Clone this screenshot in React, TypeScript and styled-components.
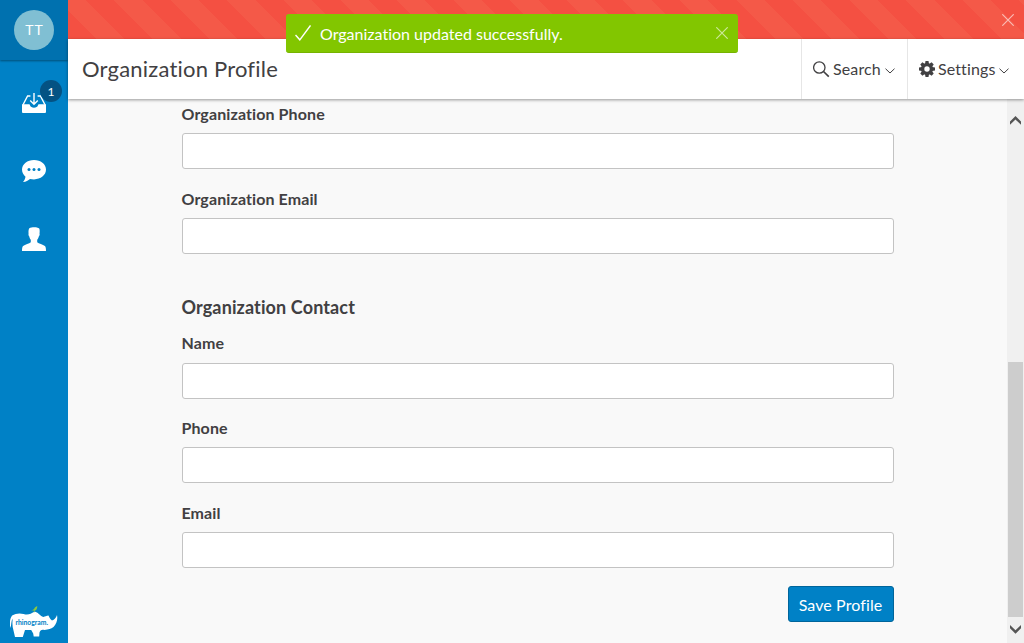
import React from "react";
import styled, { createGlobalStyle } from "styled-components";

const GlobalStyle = createGlobalStyle`
  *, *::before, *::after { box-sizing: border-box; }
  body {
    margin: 0;
    font: 400 16px/24px Lato, "Liberation Sans", sans-serif;
    font-variant-ligatures: none;
    color: #414042;
    background: #f9f9f9;
    overflow: hidden;
  }
  button, input { font-variant-ligatures: none; }
  svg { display: block; flex: none; }
`;

const Shell = styled.div`
  position: relative;
  display: flex;
  width: 100%;
  height: 100vh;
`;

const Sidebar = styled.nav`
  display: flex;
  flex-direction: column;
  align-items: center;
  width: 68px;
  flex: none;
  padding-bottom: 4px;
  background: #0081c6;
`;

const AvatarPanel = styled.div`
  display: flex;
  justify-content: center;
  width: 100%;
  height: 60px;
  padding-top: 10px;
  background: #0071af;
  box-shadow: 0 1px 2px rgba(0, 0, 0, 0.4);
`;

const Avatar = styled.div`
  width: 40px;
  height: 40px;
  border-radius: 50%;
  background: #80bfd3;
  color: #fff;
  font-size: 14px;
  line-height: 40px;
  letter-spacing: 0.8px;
  text-indent: 0.8px;
  text-align: center;
`;

const NavList = styled.div`
  display: flex;
  flex-direction: column;
  flex: 1;
  padding-top: 9px;
`;

const NavItem = styled.a`
  position: relative;
  display: flex;
  align-items: center;
  justify-content: center;
  width: 68px;
  height: 68px;
`;

const Badge = styled.span`
  position: absolute;
  top: 11px;
  left: 40px;
  width: 22px;
  height: 22px;
  border-radius: 50%;
  background: #045283;
  color: #fff;
  font-size: 12px;
  line-height: 23px;
  text-align: center;
`;

const Main = styled.div`
  display: flex;
  flex-direction: column;
  flex: 1;
  min-width: 0;
`;

const AlertBar = styled.div`
  display: flex;
  align-items: center;
  justify-content: flex-end;
  height: 39px;
  flex: none;
  padding-right: 10px;
  background: repeating-linear-gradient(45deg, #f45042 0 20px, #f45948 20px 40px);
`;

const Header = styled.header`
  position: relative;
  z-index: 1;
  display: flex;
  height: 60px;
  flex: none;
  background: #fff;
  box-shadow: 0 1px 3px rgba(0, 0, 0, 0.4);
`;

const Title = styled.h1`
  flex: 1;
  margin: 0;
  padding-left: 14px;
  font-size: 22px;
  font-weight: 400;
  line-height: 60px;
  letter-spacing: 0.2px;
`;

const HeaderAction = styled.button<{ $width: number }>`
  display: flex;
  align-items: center;
  width: ${(p) => p.$width}px;
  padding: 0 0 0 10.5px;
  border: 0;
  border-left: 1px solid #e6e6e6;
  background: none;
  color: inherit;
  font: inherit;
  font-variant-ligatures: none;
`;

const ActionText = styled.span`
  margin: 0 4px 0 3.5px;
  letter-spacing: 0.12px;
`;

const Content = styled.div`
  display: flex;
  flex: 1;
  min-height: 0;
`;

const FormArea = styled.form`
  flex: 1;
  padding: 3px 113px 0 114px;
`;

const Field = styled.div<{ $gap?: number; $labelHeight?: number }>`
  display: flex;
  flex-direction: column;
  margin-bottom: ${(p) => p.$gap ?? 18}px;

  label { height: ${(p) => p.$labelHeight ?? 31}px; }
`;

const Label = styled.label`
  margin-left: -0.5px;
  font-weight: 700;
  letter-spacing: 0.1px;
`;

const Input = styled.input`
  width: 712px;
  height: 36px;
  padding: 0 10px;
  border: 1px solid #c3c3c3;
  border-radius: 3px;
  background: #fff;
  font: inherit;
`;

const SectionTitle = styled.h2`
  margin: 0 0 12px -0.5px;
  font-size: 18px;
  font-weight: 700;
  line-height: 24px;
  letter-spacing: 0.12px;
`;

const FormFooter = styled.div`
  display: flex;
  justify-content: flex-end;
  width: 712px;
`;

const SaveButton = styled.button`
  width: 106px;
  height: 36px;
  padding: 2px 1px 0 0;
  border: 1px solid #00659b;
  border-radius: 3px;
  background: #0081c6;
  color: #fff;
  font: inherit;
  letter-spacing: 0.1px;
  font-variant-ligatures: none;
`;

const Scrollbar = styled.div`
  display: flex;
  flex-direction: column;
  align-items: center;
  width: 17px;
  padding: 17px 0 9px;
  background: #f0f0f0;
`;

const Thumb = styled.div`
  width: 15px;
  height: 255px;
  margin: auto 0 8px;
  background: #cdcdcd;
`;

const Toast = styled.div`
  position: absolute;
  z-index: 2;
  top: 14px;
  left: 286px;
  display: flex;
  align-items: center;
  width: 452px;
  height: 39px;
  padding: 0 10px 0 9px;
  border-bottom: 1px solid #76b300;
  border-radius: 3px;
  background: #82c600;
  color: #fff;
`;

const ToastText = styled.span`
  flex: 1;
  padding: 2px 0 0 9px;
`;

const Close = () => (
  <svg width="12" height="12" viewBox="0 0 12 12" fill="none" stroke="#fff" strokeOpacity=".6" strokeWidth="1.2">
    <path d="M.3.3l11.4 11.4M11.7.3L.3 11.7" />
  </svg>
);

const ChevronIcon = styled.svg`
  margin-top: 3px;
`;

const Chevron = () => (
  <ChevronIcon width="10" height="6" viewBox="0 0 10 6" fill="none" stroke="#414042">
    <path d="M.5.7L5 5 9.5.7" />
  </ChevronIcon>
);

const ScrollArrow = ({ down = false }: { down?: boolean }) => (
  <svg width="11" height="9" viewBox="0 0 11 9" fill="#555">
    <path d={down ? "M0 0L5.5 5.2 11 0V3.2L5.5 8.8 0 3.2z" : "M0 8.8L5.5 3.6 11 8.8V5.6L5.5 0 0 5.6z"} />
  </svg>
);

const InboxIcon = () => (
  <svg width="24" height="22" viewBox="0 0 24 22">
    <path d="M8.4 4H5.6L1 12.8M15.6 4h2.8L23 12.8" fill="none" stroke="#fff" strokeWidth="1.4" />
    <path d="M0 12.2h6.8c.8 0 1 .5 1.3 1.3.5 1.3 1.8 2.2 3.9 2.2s3.400-.9 3.900-2.200c.3-.8.5-1.300 1.300-1.300H24v7.500c0 .8-.5 1.300-1.300 1.300H1.300C.5 21 0 20.500 0 19.700z" fill="#fff" />
    <path d="M12 1v11M8.200 8.500L12 12.200l3.800-3.700" fill="none" stroke="#fff" strokeWidth="1.400" />
  </svg>
);

const ChatIcon = () => (
  <svg width="24" height="22" viewBox="0 0 24 22">
    <path d="M12 0C5.400 0 0 4.200 0 9.600c0 3 1.500 5.500 3.500 7.200-.3 1.800-1 3.500-2.500 5.100 3-.3 5.200-1.400 7-3 1.300.3 2.600.5 4 .5 6.600 0 12-4.200 12-9.800S18.600 0 12 0z" fill="#fff" />
    <g fill="#0081c6"><circle cx="7" cy="9.500" r="1.500" /><circle cx="12" cy="9.500" r="1.500" /><circle cx="17" cy="9.500" r="1.500" /></g>
  </svg>
);

const PersonIcon = () => (
  <svg width="24" height="24" viewBox="0 0 24 24">
    <path d="M7.300 1.200C9.500-.1 15-.3 17 1.300c.8.700.8 3.200.5 5.200.4.600 0 2.500-.7 2.900-.3 1.500-1.100 2.700-1.600 3.400v2.500c1.500 1.700 5.700 2 7.700 3.700.9.800 1.100 2.800 1.100 5H0c0-2.200.2-4.200 1.100-5 2-1.700 6.200-2 7.700-3.700v-2.500C8.200 12 7.500 10.900 7.300 9.400c-.8-.4-1-2.300-.7-2.900-.3-2-.1-4 .7-5.300z" fill="#fff" />
  </svg>
);

const SearchIcon = () => (
  <svg width="17" height="17" viewBox="0 0 17 17" fill="none" stroke="#414042">
    <circle cx="6.300" cy="6.500" r="5.700" strokeWidth="1.300" />
    <path d="M10.500 10.500l5.300 5.200" strokeWidth="1.700" />
  </svg>
);

const GearIcon = () => (
  <svg width="16" height="16" viewBox="0 0 16 16">
    <g fill="#414042">
      {[0, 45, 90, 135].map((a) => (
        <path key={a} d="M6.500 0h3l.5 3v10l-.5 3h-3L6 13V3z" transform={`rotate(${a} 8 8)`} />
      ))}
      <circle cx="8" cy="8" r="6" />
    </g>
    <circle cx="8" cy="8" r="2.700" fill="#fff" />
  </svg>
);

const RhinoLogo = () => (
  <svg width="48" height="33" viewBox="0.5 0 48 33">
    <path d="M2.600 9.500C6 7.500 10 6.800 14 8c5.500 1.700 7-.7 11-2.300C28 5.300 30 9.500 34 11c1.500-.4 3-1.300 5-1.500.8 1.500 1.300 3.300 3.500 5 2.500-.5 4-2.800 5-5.500 1 4.500-.5 9-3.500 12-2.500 2.200-5 2.300-9 3-3.500-.7-4 .5-5 2.500l-.3 4h-5.500l-.5-3-2-3.500h-6.200L13.300 31H5.500L4 24.500C2.800 21 2.700 17 3.200 12.500 1.500 15 2 19 1 22c-1.300-4-.7-9.500 1.600-12.500z" fill="#fff" />
    <path d="M21.500 4c1.800 0 2.800-.5 3.500-1.800C25.400 1 26.500.7 27.800 0c-.1 2.500-.7 4.400-3 4.700z" fill="#8cc63f" />
    <path d="M24.800 4.300v2" stroke="#8cc63f" strokeWidth=".7" />
    <text x="6" y="18.800" fill="#0081c6" fontFamily="Lato, sans-serif" fontSize="7" fontWeight="700" textLength="32.5" lengthAdjust="spacingAndGlyphs">rhinogram.</text>
  </svg>
);

export default function App() {
  return (
    <>
      <GlobalStyle />
      <Shell>
        <Sidebar>
          <AvatarPanel><Avatar>TT</Avatar></AvatarPanel>
          <NavList>
            <NavItem><InboxIcon /><Badge>1</Badge></NavItem>
            <NavItem><ChatIcon /></NavItem>
            <NavItem><PersonIcon /></NavItem>
          </NavList>
          <RhinoLogo />
        </Sidebar>
        <Main>
          <AlertBar><Close /></AlertBar>
          <Header>
            <Title>Organization Profile</Title>
            <HeaderAction $width={106}><SearchIcon /><ActionText>Search</ActionText><Chevron /></HeaderAction>
            <HeaderAction $width={117}><GearIcon /><ActionText>Settings</ActionText><Chevron /></HeaderAction>
          </Header>
          <Content>
            <FormArea>
              <Field><Label>Organization Phone</Label><Input /></Field>
              <Field $gap={41}><Label>Organization Email</Label><Input /></Field>
              <SectionTitle>Organization Contact</SectionTitle>
              <Field $labelHeight={32} $gap={17}><Label>Name</Label><Input /></Field>
              <Field><Label>Phone</Label><Input /></Field>
              <Field><Label>Email</Label><Input /></Field>
              <FormFooter><SaveButton type="button">Save Profile</SaveButton></FormFooter>
            </FormArea>
            <Scrollbar><ScrollArrow /><Thumb /><ScrollArrow down /></Scrollbar>
          </Content>
        </Main>
        <Toast>
          <svg width="16" height="16" viewBox="0 0 16 16" fill="none" stroke="#fff" strokeWidth="1.400">
            <path d="M.5 10l4.300 4.800L15.500.5" />
          </svg>
          <ToastText>Organization updated successfully.</ToastText>
          <Close />
        </Toast>
      </Shell>
    </>
  );
}
